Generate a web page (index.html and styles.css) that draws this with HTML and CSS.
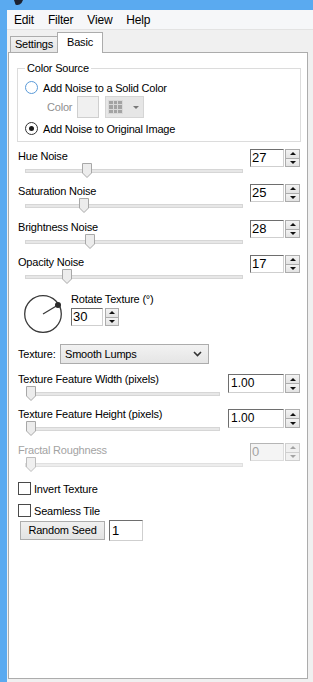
FILE: index.html
```html
<!DOCTYPE html>
<html>
<head>
<meta charset="utf-8">
<link rel="stylesheet" href="styles.css">
</head>
<body>
<div class="window">
  <div class="titlebar">
    <svg class="appicon" width="10" height="6" viewBox="0 0 10 6"><path d="M0 0 H9 L7.5 3 Q4.5 6 1.5 4.5 Z" fill="#1d2230"/></svg>
  </div>
  <div class="menubar"><span>Edit</span><span>Filter</span><span>View</span><span>Help</span></div>
  <div class="tabs">
    <div class="tab">Settings</div>
    <div class="tab active">Basic</div>
  </div>
  <div class="panel">
    <div class="group">
      <div class="group-title">Color Source</div>
      <div class="radio-row first"><span class="radio hover"></span><span>Add Noise to a Solid Color</span></div>
      <div class="color-row">
        <span class="color-label">Color</span>
        <span class="swatch"></span>
        <span class="grid-btn">
          <svg width="15" height="14" viewBox="0 0 15 14">
            <rect x="0" y="0" width="15" height="14" fill="#d9d9d9"/>
            <rect x="1" y="1" width="4" height="3" fill="#a3a3a3"/><rect x="6" y="1" width="3" height="3" fill="#a3a3a3"/><rect x="10" y="1" width="4" height="3" fill="#a3a3a3"/>
            <rect x="1" y="5" width="4" height="4" fill="#a3a3a3"/><rect x="6" y="5" width="3" height="4" fill="#a3a3a3"/><rect x="10" y="5" width="4" height="4" fill="#a3a3a3"/>
            <rect x="1" y="10" width="4" height="3" fill="#a3a3a3"/><rect x="6" y="10" width="3" height="3" fill="#a3a3a3"/><rect x="10" y="10" width="4" height="3" fill="#a3a3a3"/>
          </svg>
          <span class="grid-arrow"></span>
        </span>
      </div>
      <div class="radio-row second"><span class="radio checked"></span><span>Add Noise to Original Image</span></div>
    </div>

    <div class="nrow first">
      <div class="main">
        <div class="label">Hue Noise</div>
        <div class="slider"><div class="track"></div><svg class="thumb" style="left:57px" width="10" height="15" viewBox="0 0 10 15"><path d="M0.5 0.5 H9.5 V10 L5 14.5 L0.5 10 Z" fill="#ececec" stroke="#a8a8a8"/></svg></div>
      </div>
      <div class="spin"><div class="spin-text">27</div><div class="spin-btns"><span class="sb"><i class="up"></i></span><span class="sb"><i class="down"></i></span></div></div>
    </div>
    <div class="nrow tall">
      <div class="main">
        <div class="label">Saturation Noise</div>
        <div class="slider"><div class="track"></div><svg class="thumb" style="left:54px" width="10" height="15" viewBox="0 0 10 15"><path d="M0.5 0.5 H9.5 V10 L5 14.5 L0.5 10 Z" fill="#ececec" stroke="#a8a8a8"/></svg></div>
      </div>
      <div class="spin"><div class="spin-text">25</div><div class="spin-btns"><span class="sb"><i class="up"></i></span><span class="sb"><i class="down"></i></span></div></div>
    </div>
    <div class="nrow">
      <div class="main">
        <div class="label">Brightness Noise</div>
        <div class="slider"><div class="track"></div><svg class="thumb" style="left:60px" width="10" height="15" viewBox="0 0 10 15"><path d="M0.5 0.5 H9.5 V10 L5 14.5 L0.5 10 Z" fill="#ececec" stroke="#a8a8a8"/></svg></div>
      </div>
      <div class="spin"><div class="spin-text">28</div><div class="spin-btns"><span class="sb"><i class="up"></i></span><span class="sb"><i class="down"></i></span></div></div>
    </div>
    <div class="nrow">
      <div class="main">
        <div class="label">Opacity Noise</div>
        <div class="slider"><div class="track"></div><svg class="thumb" style="left:37px" width="10" height="15" viewBox="0 0 10 15"><path d="M0.5 0.5 H9.5 V10 L5 14.5 L0.5 10 Z" fill="#ececec" stroke="#a8a8a8"/></svg></div>
      </div>
      <div class="spin"><div class="spin-text">17</div><div class="spin-btns"><span class="sb"><i class="up"></i></span><span class="sb"><i class="down"></i></span></div></div>
    </div>

    <div class="dial-row">
      <svg class="dial" width="40" height="40" viewBox="0 0 40 40">
        <circle cx="20" cy="20" r="18.3" fill="none" stroke="#3a3a3a" stroke-width="1.3"/>
        <line x1="20" y1="20" x2="35" y2="11" stroke="#3a3a3a" stroke-width="1.3"/>
        <circle cx="35" cy="11" r="3" fill="#2b2b2b"/>
      </svg>
      <div class="dial-side">
        <div class="label">Rotate Texture (°)</div>
        <div class="spin small"><div class="spin-text">30</div><div class="spin-btns"><span class="sb"><i class="up"></i></span><span class="sb"><i class="down"></i></span></div></div>
      </div>
    </div>

    <div class="texture-row">
      <span class="texture-label">Texture:</span>
      <div class="select"><span>Smooth Lumps</span><svg width="9" height="6" viewBox="0 0 9 6"><path d="M1 1 L4.5 4.5 L8 1" fill="none" stroke="#333" stroke-width="1.6"/></svg></div>
    </div>

    <div class="nrow feat">
      <div class="main">
        <div class="label">Texture Feature Width (pixels)</div>
        <div class="slider short"><div class="track"></div><svg class="thumb" style="left:0" width="10" height="15" viewBox="0 0 10 15"><path d="M0.5 0.5 H9.5 V10 L5 14.5 L0.5 10 Z" fill="#ececec" stroke="#a8a8a8"/></svg></div>
      </div>
      <div class="spin wide"><div class="spin-text">1.00</div><div class="spin-btns"><span class="sb"><i class="up"></i></span><span class="sb"><i class="down"></i></span></div></div>
    </div>
    <div class="nrow feat tall">
      <div class="main">
        <div class="label">Texture Feature Height (pixels)</div>
        <div class="slider short"><div class="track"></div><svg class="thumb" style="left:0" width="10" height="15" viewBox="0 0 10 15"><path d="M0.5 0.5 H9.5 V10 L5 14.5 L0.5 10 Z" fill="#ececec" stroke="#a8a8a8"/></svg></div>
      </div>
      <div class="spin wide"><div class="spin-text">1.00</div><div class="spin-btns"><span class="sb"><i class="up"></i></span><span class="sb"><i class="down"></i></span></div></div>
    </div>
    <div class="nrow disabled">
      <div class="main">
        <div class="label">Fractal Roughness</div>
        <div class="slider"><div class="track"></div><svg class="thumb" style="left:1px" width="10" height="15" viewBox="0 0 10 15"><path d="M0.5 0.5 H9.5 V10 L5 14.5 L0.5 10 Z" fill="#f0f0f0" stroke="#bdbdbd"/></svg></div>
      </div>
      <div class="spin"><div class="spin-text">0</div><div class="spin-btns"><span class="sb"><i class="up"></i></span><span class="sb"><i class="down"></i></span></div></div>
    </div>

    <div class="check-row first"><span class="checkbox"></span><span>Invert Texture</span></div>
    <div class="check-row"><span class="checkbox"></span><span>Seamless Tile</span></div>
    <div class="seed-row">
      <div class="button">Random Seed</div>
      <div class="seed-text">1</div>
    </div>
  </div>
</div>
</body>
</html>
```
FILE: styles.css
```css
* { box-sizing: border-box; }
body {
  margin: 0;
  font-family: "Liberation Sans", Arial, sans-serif;
  font-size: 11px;
  letter-spacing: -0.2px;
  color: #000;
  background: #f0f0f0;
}
.window {
  width: 313px;
  height: 682px;
  border-left: 7px solid #5aaaf0;
  background: #f0f0f0;
  display: flex;
  flex-direction: column;
  overflow: hidden;
}
.titlebar {
  height: 10px;
  flex: none;
  background: #5aaaf0;
  padding-left: 7px;
}
.appicon { display: block; }
.menubar {
  height: 20px;
  flex: none;
  display: flex;
  padding-top: 2px;
  line-height: 17px;
  font-size: 12px;
  background: #f6f7f9;
  border-bottom: 1px solid #e3e3e3;
}
.menubar span { padding: 0 7px; }
.tabs {
  height: 22px;
  flex: none;
  display: flex;
  align-items: flex-end;
  padding-left: 3px;
  position: relative;
  z-index: 1;
}
.tab {
  width: 48px;
  height: 16px;
  border: 1px solid #acacac;
  border-bottom: none;
  background: linear-gradient(#f2f2f2, #e6e6e6);
  text-align: center;
  line-height: 15px;
}
.tab.active {
  width: 46px;
  height: 21px;
  margin-left: -1px;
  margin-bottom: -1px;
  background: #fff;
  line-height: 19px;
}
.panel {
  flex: 1;
  width: 300px;
  margin: 0 5px 3px 1px;
  background: #fff;
  border: 1px solid #acacac;
  padding: 0 7px 0 9px;
}

/* group box */
.group {
  margin: 15px -1px 0 -1px;
  border: 1px solid #dcdcdc;
  padding: 0 0 6px 7px;
}
.group-title {
  width: fit-content;
  margin-top: -8px;
  padding: 0 2px;
  background: #fff;
  line-height: 14px;
}
.radio-row {
  display: flex;
  align-items: center;
  height: 13px;
}
.radio-row.first { margin-top: 6px; }
.radio-row.second { margin-top: 4px; }
.radio {
  width: 13px;
  height: 13px;
  border-radius: 50%;
  border: 1px solid #333;
  background: #fff;
  margin-right: 5px;
  display: flex;
  align-items: center;
  justify-content: center;
}
.radio.hover { border-color: #5a9ad8; }
.radio.checked::after {
  content: "";
  width: 5px;
  height: 5px;
  border-radius: 50%;
  background: #1a1a1a;
}
.color-row {
  display: flex;
  align-items: center;
  height: 22px;
  margin-top: 2px;
  padding-left: 22px;
}
.color-label { width: 30px; color: #8f8f8f; }
.swatch {
  width: 22px;
  height: 22px;
  border: 1px solid #cfcfcf;
  background: #f0f0f0;
}
.grid-btn {
  width: 39px;
  height: 22px;
  margin-left: 6px;
  border: 1px solid #d5d5d5;
  background: #e6e6e6;
  display: flex;
  align-items: center;
  padding-left: 2px;
}
.grid-arrow {
  margin-left: 10px;
  width: 0;
  height: 0;
  border-left: 3px solid transparent;
  border-right: 3px solid transparent;
  border-top: 3px solid #777;
}

/* slider rows */
.nrow {
  display: flex;
  height: 35px;
}
.nrow.first { margin-top: 7px; }
.nrow.tall { height: 36px; }
.nrow .main { flex: 1; }
.label {
  height: 14px;
  line-height: 14px;
  white-space: nowrap;
}
.slider {
  position: relative;
  width: 218px;
  margin-left: 7px;
  height: 16px;
  padding-top: 6px;
}
.slider.short { width: 194px; margin-left: 8px; }
.track {
  height: 4px;
  background: #e7e7e7;
  border: 1px solid #d6d6d6;
}
.thumb {
  position: absolute;
  top: 0;
  display: block;
}

/* spin boxes */
.spin {
  display: flex;
  width: 50px;
  height: 18px;
  flex: none;
}
.nrow.feat .spin { margin-top: 2px; height: 19px; }
.spin.wide { width: 72px; }
.spin.small { width: 48px; margin-top: 2px; }
.spin-text {
  flex: 1;
  border: 1px solid;
  border-color: #6e6e6e #cfcfcf #cfcfcf #6e6e6e;
  background: #fff;
  font-size: 13px;
  line-height: 15px;
  padding-left: 1px;
  letter-spacing: 0;
}
.spin.wide .spin-text { font-size: 12px; line-height: 16px; padding-left: 2px; }
.spin-btns {
  width: 15px;
  margin-left: 1px;
  display: flex;
  flex-direction: column;
}
.spin.small .spin-btns { margin-left: 2px; width: 14px; }
.sb {
  flex: 1;
  border: 1px solid #acacac;
  background: linear-gradient(#f3f3f3, #e3e3e3);
  display: flex;
  align-items: center;
  justify-content: center;
}
.sb + .sb { border-top: none; }
.up, .down {
  width: 0;
  height: 0;
  border-left: 3px solid transparent;
  border-right: 3px solid transparent;
}
.up { border-bottom: 3px solid #111; }
.down { border-top: 3px solid #111; }

.disabled .label { color: #a3a3a3; }
.disabled .spin-text { background: #f4f4f4; color: #a3a3a3; border-color: #b5b5b5 #dcdcdc #dcdcdc #b5b5b5; }
.disabled .sb { border-color: #cfcfcf; background: #f0f0f0; }
.disabled .up { border-bottom-color: #a3a3a3; }
.disabled .down { border-top-color: #a3a3a3; }
.disabled .track { background: #ededed; border-color: #e0e0e0; }

/* dial */
.dial-row {
  display: flex;
  height: 54px;
}
.dial {
  display: block;
  margin: 4px 0 0 5px;
}
.dial-side {
  margin-left: 8px;
  padding-top: 2px;
}

/* texture select */
.texture-row {
  display: flex;
  align-items: center;
  height: 20px;
}
.texture-label { width: 42px; }
.select {
  width: 149px;
  height: 20px;
  border: 1px solid #acacac;
  background: linear-gradient(#f2f2f2, #e5e5e5);
  display: flex;
  align-items: center;
  justify-content: space-between;
  padding: 0 6px 0 4px;
}
.select svg { display: block; }
.nrow.feat { margin-top: 8px; }
.nrow.feat.tall { margin-top: 0; }

/* checkboxes */
.check-row {
  display: flex;
  align-items: center;
  height: 17px;
  margin-top: 5px;
}
.check-row.first { margin-top: 2px; }
.checkbox {
  width: 13px;
  height: 13px;
  border: 1px solid #4a4a4a;
  background: #fff;
  margin-right: 3px;
}
.seed-row {
  display: flex;
  align-items: center;
  height: 21px;
  margin-top: 1px;
}
.button {
  width: 85px;
  height: 19px;
  margin-left: 2px;
  border: 1px solid #adadad;
  background: linear-gradient(#f0f0f0, #e3e3e3);
  text-align: center;
  line-height: 17px;
}
.seed-text {
  width: 34px;
  height: 21px;
  margin-left: 4px;
  border: 1px solid;
  border-color: #6e6e6e #cfcfcf #cfcfcf #6e6e6e;
  font-size: 13px;
  line-height: 19px;
  padding-left: 2px;
  letter-spacing: 0;
}
```
